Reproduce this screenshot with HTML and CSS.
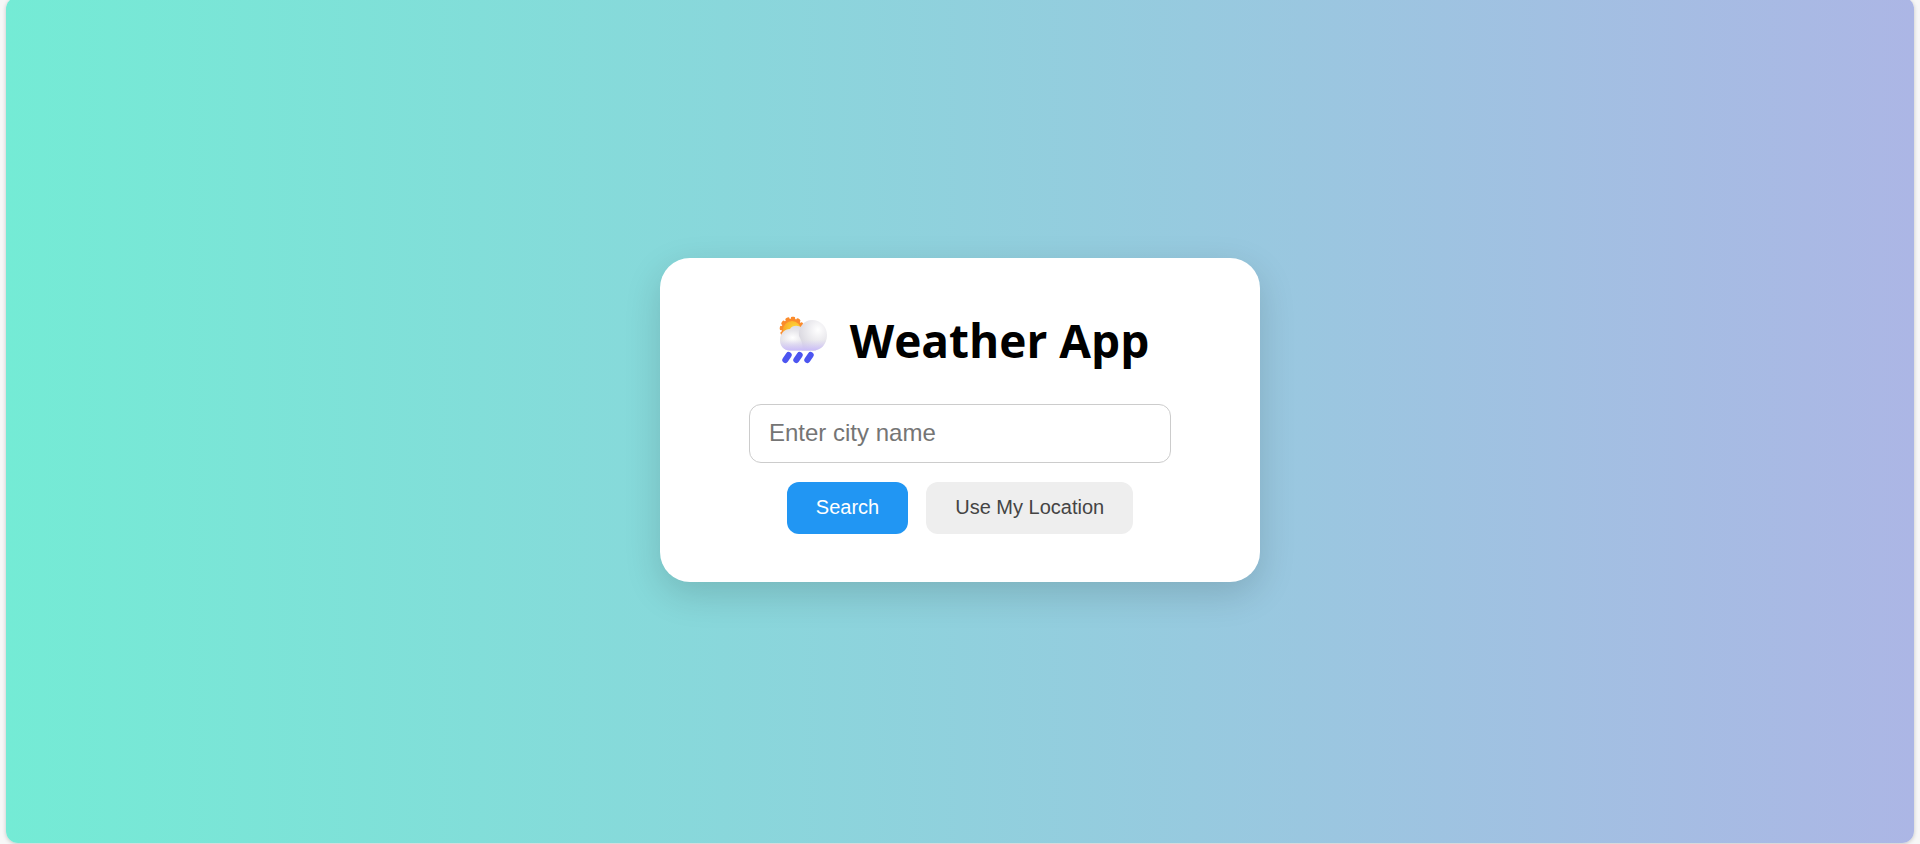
FILE: index.html
```html
<!DOCTYPE html>
<html lang="en">
<head>
<meta charset="utf-8">
<meta name="viewport" content="width=device-width, initial-scale=1">
<title>Weather App</title>
<link rel="stylesheet" href="styles.css">
</head>
<body>
<main class="page">
  <form class="card">
    <h1 class="title">
      <svg class="weather-icon" viewBox="2 11 58 49" aria-hidden="true">
        <defs>
          <radialGradient id="sun" cx="65%" cy="40%" r="60%"><stop offset="0" stop-color="#ffdb38"/><stop offset="1" stop-color="#f9ab27"/></radialGradient>
          <radialGradient id="big" cx="68%" cy="32%" r="75%"><stop offset="0" stop-color="#ffffff"/><stop offset=".5" stop-color="#ebeaee"/><stop offset="1" stop-color="#d8d6de"/></radialGradient>
          <radialGradient id="small" cx="35%" cy="48%" r="62%"><stop offset="0" stop-color="#ffffff"/><stop offset=".5" stop-color="#e6e5ea"/><stop offset="1" stop-color="#d8d6de"/></radialGradient>
          <linearGradient id="base" x1="0" y1="0" x2="0" y2="1"><stop offset=".65" stop-color="#d8cffa" stop-opacity="0"/><stop offset="1" stop-color="#cabcf9"/></linearGradient>
        </defs>
        <circle cx="23" cy="24" r="10.500" fill="#fb8b2b"/>
        <circle cx="23" cy="24" r="10.800" fill="none" stroke="#fb8b2b" stroke-width="3" stroke-linecap="round" stroke-dasharray="1.5 4.150"/>
        <circle cx="23" cy="25" r="9" fill="url(#sun)"/>
        <path d="M21 45.500C15 45.500 11 41 11 35C11 28.500 15.500 24 21 24C23 20.500 29 19.500 33 23L47 45.500Z" fill="url(#small)"/>
        <path d="M33 45.500C35 40 31.500 34 30 31C29 22 35 15 43 15C52 15 58 22 58 30C58 39 52 45.500 44 45.500Z" fill="url(#big)"/>
        <path d="M21 45.500C15 45.500 11 41 11 35C11 28.500 15.500 24 21 24C24 22 29 23 30 25C32 18 37 15 43 15C52 15 58 22 58 30C58 39 52 45.500 44 45.500Z" fill="url(#base)"/>
        <path d="M16.300 55L19.700 50M27.300 55L30.700 50M38.300 55L41.700 50" stroke="#4c55f0" stroke-width="6" stroke-linecap="round"/>
      </svg>
      <span>Weather App</span>
    </h1>
    <input class="city" type="text" placeholder="Enter city name" aria-label="City name">
    <div class="actions">
      <button class="button primary" type="button">Search</button>
      <button class="button" type="button">Use My Location</button>
    </div>
  </form>
</main>
</body>
</html>
```

FILE: styles.css
```css
* {
  box-sizing: border-box;
}

body {
  margin: 0;
  padding: 0 6px 1px;
  height: 100vh;
  overflow: hidden;
  background: #f7f7f7;
  font-family: "Segoe UI", "Open Sans", sans-serif;
}

.page {
  display: flex;
  align-items: center;
  justify-content: center;
  height: calc(100% + 3px);
  margin-top: -3px;
  border-radius: 12px;
  background: linear-gradient(to right, #74ebd5, #acb6e5);
  box-shadow: 0 1px 4px rgba(0, 0, 0, 0.2);
}

.card {
  display: flex;
  flex-direction: column;
  align-items: center;
  width: 600px;
  max-width: 100%;
  padding: 48px 89px;
  border-radius: 30px;
  background: #fff;
  box-shadow: 0 12px 36px rgba(0, 0, 0, 0.15);
}

.title {
  display: flex;
  align-items: center;
  gap: 21px;
  margin: 0 0 30px;
  font-size: 46px;
  line-height: 68px;
  font-weight: 700;
  color: #000;
  white-space: nowrap;
}

.weather-icon {
  width: 58px;
  height: 49px;
}

.city {
  width: 100%;
  height: 59px;
  padding: 0 18px 2px 19px;
  border: 1px solid #ccc;
  border-radius: 12px;
  background: #fff;
  font: 24px "Liberation Sans", Arial, sans-serif;
}

.city::placeholder {
  color: #757575;
}

.actions {
  display: flex;
  gap: 18px;
  margin-top: 19px;
}

.button {
  height: 52px;
  padding: 0 29px 2px;
  border: 0;
  border-radius: 12px;
  background: #eee;
  color: #444;
  font: 20px "Liberation Sans", Arial, sans-serif;
  cursor: pointer;
}

.primary {
  background: #2196f3;
  color: #fff;
}
```
